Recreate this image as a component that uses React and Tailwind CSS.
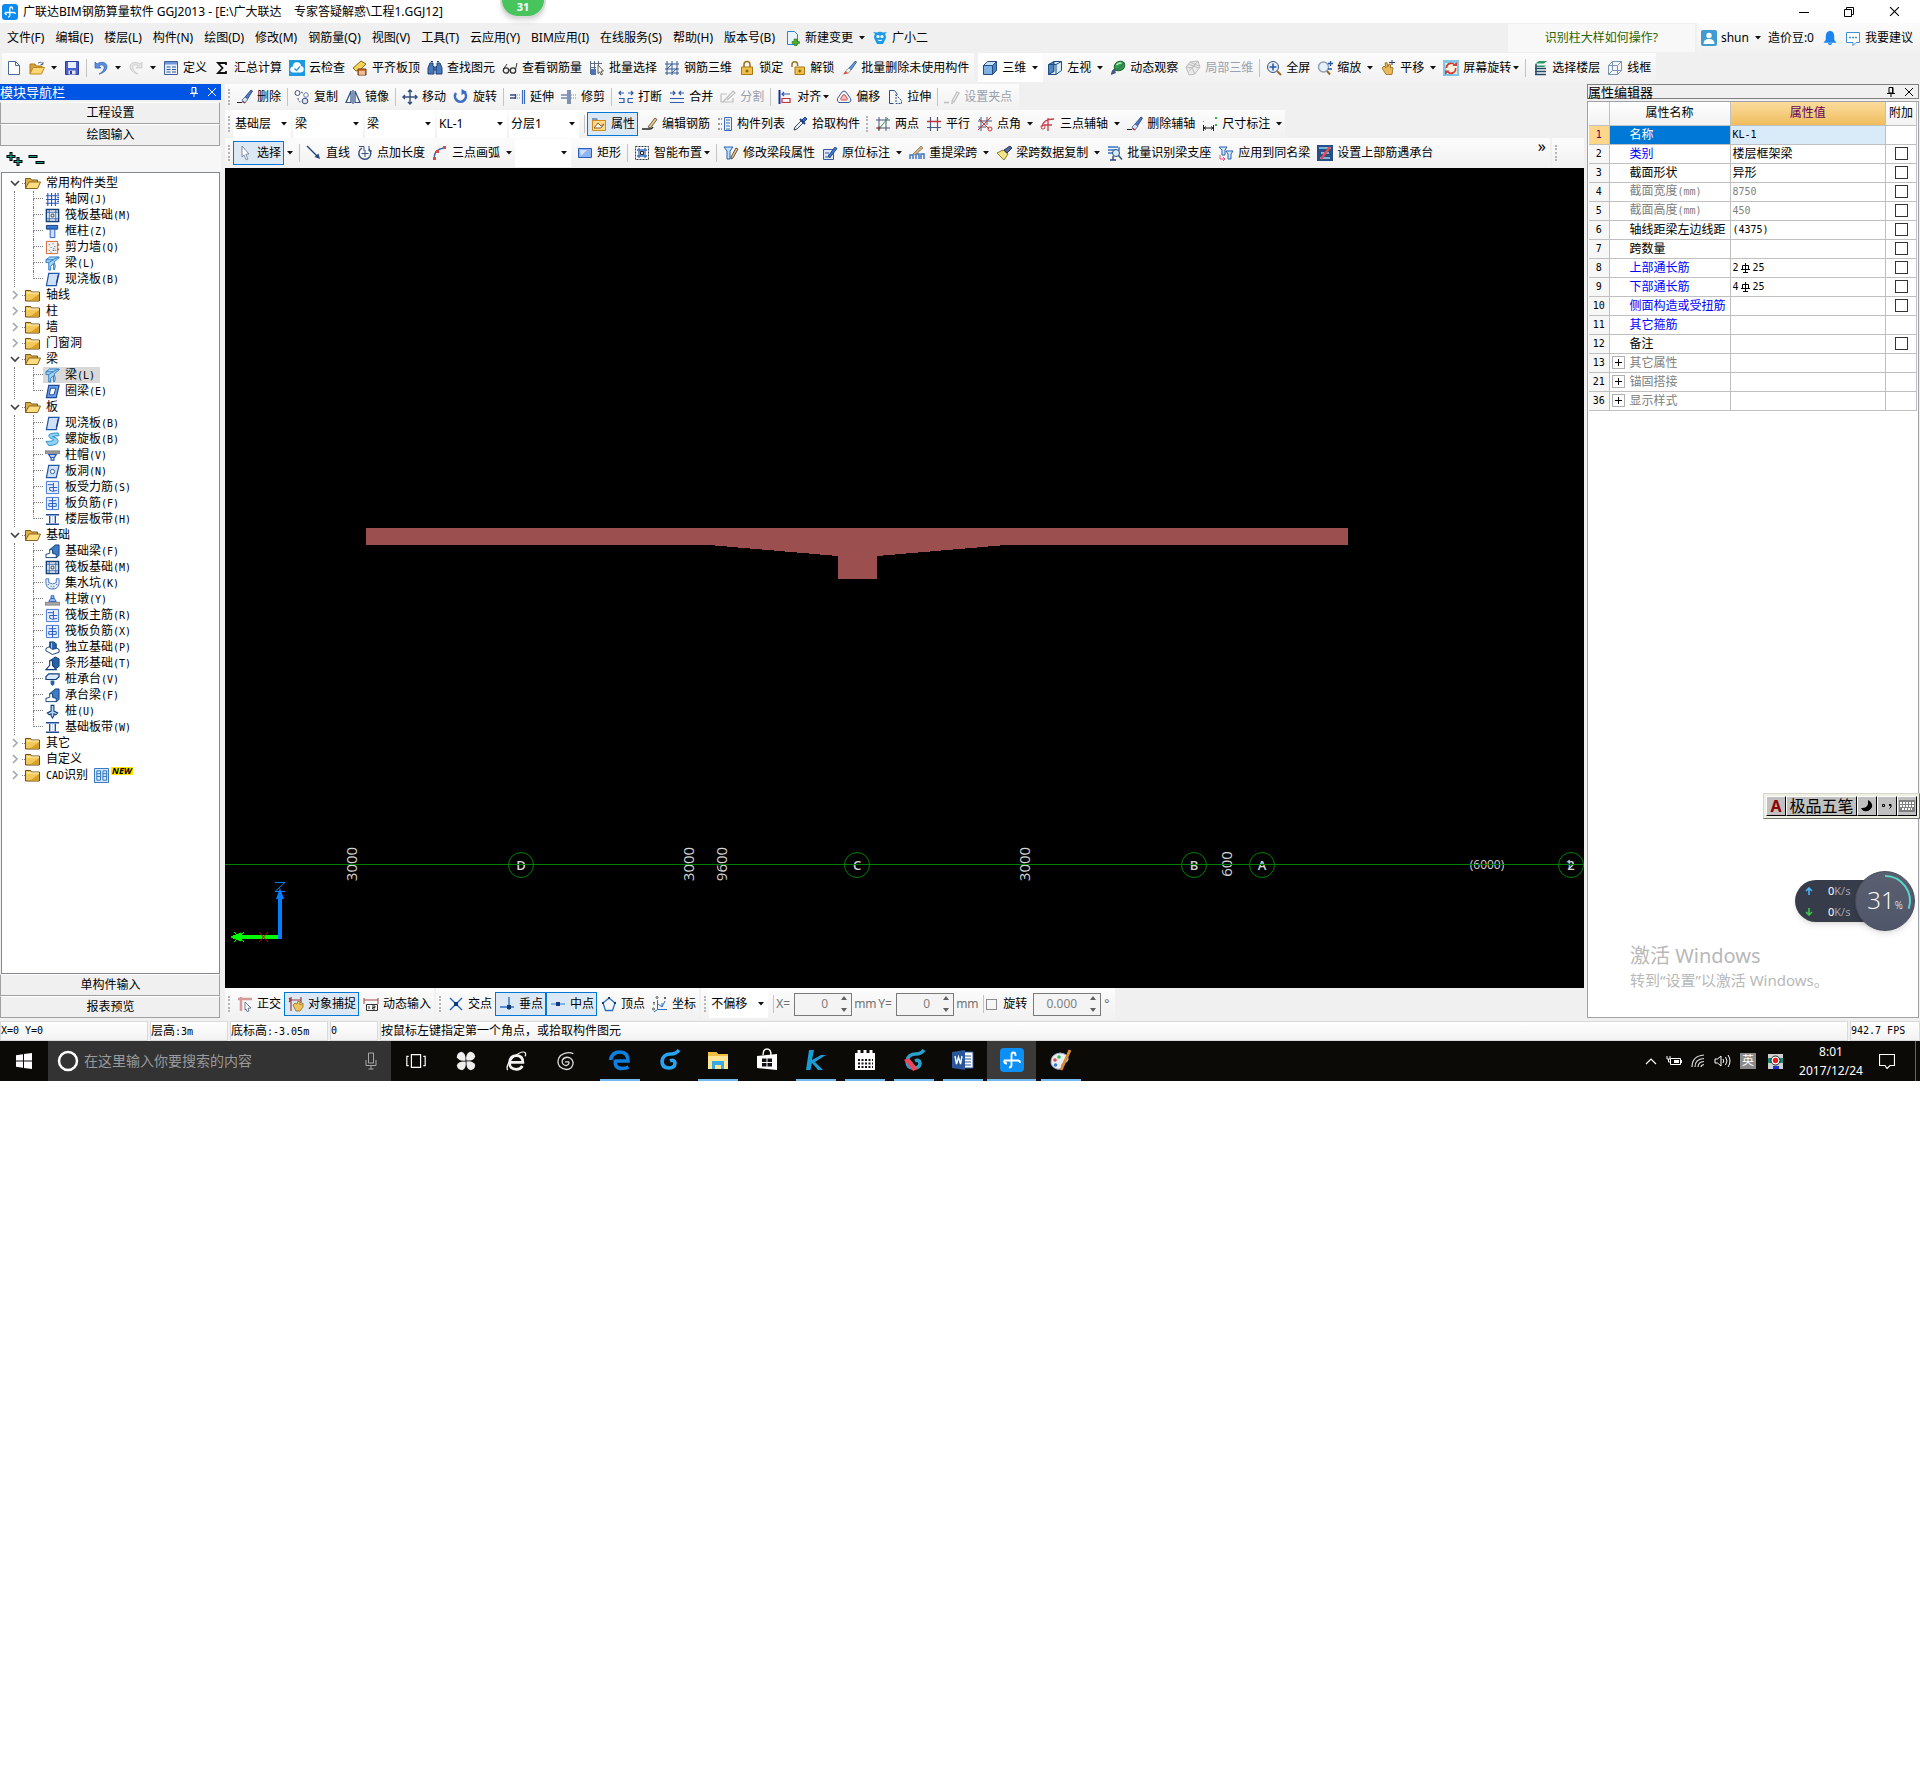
import { useState } from 'react';

const B = '#2b5797';

const ICONS = {
    app: <><rect width="16" height="16" rx="3" fill="#0c8cf0" /><path d="M10.500 5.500V4.500Q10.500 3 9.200 3T7.800 4.500V11.500Q7.800 13 6 13M3 8.500h9q1.300 0 1.300 1.500M3 8.500q0 2 1.800 2" stroke="#fff" strokeWidth="1.300" /></>,
    newFile: <path d="M2.500 1.500h7l4 4v9h-11zM9.500 1.500v4h4" fill="#fff" stroke="#4a6a98" />,
    open: <><path d="M1 14V4h5l1 2h6v2" fill="#d8a03c" stroke="#b07818" /><path d="M1 14 4 7.500h11.500L12.500 14z" fill="#ffd873" stroke="#c08a28" /><path d="M9 3q3-2 5 1m0-2v2.500h-2.500" stroke="#5a6f8f" /></>,
    save: <><path d="M1.500 1.500h13v13h-13z" fill="#4a5fd0" stroke="#2c3c9c" /><path d="M4 2h8v6H4z" fill="#e8eefc" /><path d="M4.500 10.500h7v4h-7z" fill="#dfe4f0" /><path d="M6 11h2v3H6z" fill="#2c3c9c" /></>,
    undo: <><path d="M2 2v6h6L5.800 6C8 4 12 5 11 8.500 10.500 11 8 13 6 14c5-1 8-4 8-7.500C13.500 2 8 1 4 4z" fill="#5b8fe0" stroke="#2c5fb4" strokeWidth=".7" /></>,
    redo: <path d="M14 2v6H8l2.200-2C8 4 4 5 5 8.500 5.500 11 8 13 10 14 5 13 2 10 2 6.500 2.500 2 8 1 12 4z" fill="#e3e3e3" stroke="#c4c4c4" strokeWidth=".7" />,
    define: <><path d="M1.500 1.500h13v13h-13z" fill="#eaf1fc" stroke="#3d5f9e" /><path d="M2 2h12v2.500H2z" fill="#6f98dc" /><path d="M3.500 7h4M3.500 9.500h4M3.500 12h4M9 7h4M9 9.500h4M9 12h4" stroke={B} /></>,
    sigma: <path d="M12 5V3H4l4.500 5L4 13h8v-2" stroke="#111" strokeWidth="1.800" />,
    cloudCheck: <><rect width="16" height="16" fill="#1d9be0" /><path d="M4.500 12.500a3 3 0 0 1-.5-6 4 4 0 0 1 8-.5 3.300 3.300 0 0 1 0 6.500z" fill="#fff" /><path d="m5.500 8.500 2 2 3.500-4" stroke="#1d9be0" strokeWidth="1.300" /></>,
    align: <><path d="M1 8 9 1l5 3-6 6-4 1z" fill="#f4d35c" stroke="#8d6a14" /><path d="M6 9h8v6H6z" fill="#d77a33" stroke="#6d3410" /><path d="M8 15v-4M10 15v-4M12 15v-4M2 12q1 3 3 2" stroke="#fff" /></>,
    binocular: <><path d="M3 3h3v3l1 1v7H1V8zM13 3h-3v3L9 7v7h6V8z" fill="#4879bd" stroke="#203f74" /><path d="M7 7h2v3H7zM4 1.500h2M10 1.500h2" stroke="#203f74" /></>,
    glasses: <><circle cx="4" cy="10.500" r="2.700" stroke="#333" strokeWidth="1.300" /><circle cx="11" cy="10.500" r="2.700" stroke="#333" strokeWidth="1.300" /><path d="M6.500 10h2M13.500 9.500 15 3M1.500 9 5 4" stroke="#333" /></>,
    batch: <><path d="M1.500 1v13M5.500 1v8M9.500 1v4M1 3.500h12M1 7.500h6" stroke="#5c6b82" /><path d="M2 9h5v6H2z" fill="#4c74bd" /><path d="m9 5 5.500 6-2.500.3 1.500 3-1.300.7-1.500-3L9 13.500z" fill="#fff" stroke="#333" strokeWidth=".8" /></>,
    rebar3d: <><path d="M3 1v14M8 1v14M13 1v14M1 4h14M1 9h14M1 13h14M3 9l5-5M8 13l5-5" stroke="#355a95" /></>,
    lock: <><path d="M5 7V4.500a3 3 0 0 1 6 0V7" stroke="#9c7420" strokeWidth="1.600" /><path d="M2.500 7h11v7.500h-11z" fill="#f1c04a" stroke="#a87812" /><path d="M8 9.500v3M6.500 11h3" stroke="#6d4c08" /></>,
    unlock: <><path d="M2 7V4.500a2.800 2.800 0 0 1 5.600 0V6" stroke="#9c7420" strokeWidth="1.500" /><path d="M5 7h9.500v7.500H5z" fill="#f1c04a" stroke="#a87812" /><path d="M9.800 9.500v3M8.300 11h3" stroke="#6d4c08" /></>,
    brush: <><path d="M14.500 1 8 8l2 2 5.500-8z" fill="#5aa0e8" stroke="#254a86" strokeWidth=".8" /><path d="m8 8-3.500 3 2.500 2.500L10 10z" fill="#f2f2f2" stroke="#777" strokeWidth=".7" /><path d="M4.500 11 2 14.500l5-1z" fill="#d2504a" /></>,
    erase: <><path d="M14 1 8 8l2.500 2L15.500 2z" fill="#4b7ac8" stroke="#1f3d78" strokeWidth=".8" /><path d="M8 8 5 11q0 3 3 3l3-4z" fill="#d9e2f2" stroke="#3c5a8c" strokeWidth=".8" /><path d="M6 12q1 2 2 1.500" stroke="#c33" strokeWidth="1.500" /><path d="M0 13.500h5" stroke="#222" /></>,
    cube: <><path d="M1.500 5.500h9v9h-9z" fill="#7fb2e4" stroke="#1f4d84" /><path d="m1.500 5.500 4-4h9l-4 4z" fill="#c6e0f7" stroke="#1f4d84" /><path d="m10.500 5.500 4-4v9l-4 4z" fill="#4f86c0" stroke="#1f4d84" /></>,
    leftView: <><path d="M1.500 4.500 7 1.500v10l-5.500 3z" fill="#4f86c0" stroke="#1f4d84" /><path d="M7 1.500h7.500v9L9 14.500H1.500L7 11.500z" fill="#dcecfa" stroke="#1f4d84" /><path d="M14.500 1.500 9 4.500v10M9 4.500H1.500" stroke="#1f4d84" /></>,
    orbit: <><path d="M1 15c0-5 4-8 8-7-4 1-4 3-3 5z" fill="#445a7a" /><ellipse cx="9.500" cy="6" rx="5.500" ry="4.500" transform="rotate(-30 9.500 6)" fill="#2e9c48" stroke="#176a2c" /><path d="M6.500 5q3-3 5-1.500" stroke="#b9eec4" strokeWidth="1.500" /><path d="M2 11c3 1 9-3 12-9" stroke="#445a7a" /></>,
    local3d: <><path d="m1 7 4-5 8-1 2 6-5 7-6 1z" fill="#e9e9e9" stroke="#bdbdbd" /><path d="m1 7 6 1 3 6M7 8l6-7M3 4l5 2 6 2M5 2l4 2 5 2M4 11l7-8" stroke="#bdbdbd" /></>,
    full: <><circle cx="7" cy="7" r="5.500" fill="#e7f1fc" stroke="#34507f" /><path d="M7 3.500v7M3.500 7h7" stroke="#2456a8" strokeWidth="1.500" /><path d="m11 11 4 4" stroke="#9a6a2a" strokeWidth="2" /></>,
    zoom: <><circle cx="6.500" cy="7" r="5" fill="#e7f1fc" stroke="#8fa0b8" strokeWidth="1.500" /><path d="m10 11 3 3.500" stroke="#9a6a2a" strokeWidth="2" /><path d="M11 3.500h5M13.500 1v5M11 9h4" stroke="#2456a8" strokeWidth="1.300" /></>,
    pan: <><path d="M2 8 4 6l2 2-1-5 2-.5L8 7l1-3 1.500.5V8l1.500-1 1 1-1 6.500H6z" fill="#e9b958" stroke="#93681c" strokeWidth=".8" /><path d="M9 2.500h6M12 0v5" stroke="#2b3c5c" /></>,
    screenRotate: <><rect width="16" height="16" fill="#7cc8e6" /><path d="M2 3h9l3 3v8H4z" fill="#f6f0dc" /><path d="M3.500 8a4.500 4.500 0 0 1 8-3M12.500 8a4.500 4.500 0 0 1-8 3.500" stroke="#d43a3a" strokeWidth="1.700" /><path d="M9.500 6H14V2zM6.500 10.500H2V15z" fill="#d43a3a" /></>,
    floors: <><path d="M3 3.500 7 1h8l-3 2.500zM3 7l2-1.500h9L12 7z" fill="#2c9868" /><path d="M4 4v11M3 8.500h11M3 11.500h11M3 14.500h11" stroke="#254a66" strokeWidth="1.500" /></>,
    wire: <path d="M1.500 5.500h9v9h-9zM1.500 5.500l4-4h9l-4 4M14.500 1.500v9l-4 4M5.500 1.500v9h9M5.500 10.500l-4 4" stroke="#7b93b5" />,
    copy: <><circle cx="3.500" cy="4" r="2.500" stroke="#3b4e74" /><circle cx="12" cy="6" r="2.300" stroke="#6b83ad" /><circle cx="11" cy="12" r="2.800" fill="#dce6f5" stroke="#3b4e74" /><path d="M4 9q0 4 3 4M7 3l2 1" stroke="#3b4e74" strokeDasharray="2 1" /></>,
    mirror: <path d="M6 2v11.500H1zM10 2v11.500h5zM8 1v14" stroke="#2f4f86" strokeWidth="1.200" />,
    move: <path d="M8 1v14M1 8h14M6 3l2-2 2 2M6 13l2 2 2-2M3 6 1 8l2 2M13 6l2 2-2 2" stroke="#34507f" strokeWidth="1.400" />,
    rotate: <><path d="M3 4a5.500 5.500 0 1 0 8-1" stroke="#3c6cc4" strokeWidth="2.600" /><path d="M8.500 0v6L14 3z" fill="#3c6cc4" /></>,
    extend: <><path d="M0 6h5M0 9h5M5.500 5v5" stroke="#2f4f86" strokeWidth="1.300" /><path d="M7 6h4M7 9h4" stroke="#888" strokeDasharray="1 1" /><path d="M12.500 1v14M14.500 1v14" stroke="#3c6cc4" strokeWidth="1.200" /></>,
    trim: <><path d="M0 6h6M0 9h6M7 1v14M9 1v14" stroke="#2f4f86" strokeWidth="1.200" /><path d="M10 6h5M10 9h5" stroke="#888" strokeDasharray="1 1" /></>,
    breakIt: <path d="M1 9.500h5v4H1M10 9.500h5M10 13.500h5M10 9.500v4M1 4h5M10 4h5M3 2 1 4l2 2M13 2l2 2-2 2" stroke="#2f5ca8" strokeWidth="1.200" />,
    merge: <path d="M1 9.500h14M1 13.500h14M1 4h5M15 4h-5M4 2l2 2-2 2M12 2l-2 2 2 2" stroke="#2f5ca8" strokeWidth="1.200" />,
    split: <path d="M1 5h6M1 5v8h12V9M3 13 13 2l2 2-8 7" stroke="#bdbdbd" strokeWidth="1.200" />,
    alignTo: <><path d="M2.500 1v14" stroke="#1c2f9c" strokeWidth="2" /><path d="M5 5h8M7 3 5 5l2 2" stroke="#2f5ca8" strokeWidth="1.200" /><path d="M5 9.500h8v4H5z" stroke="#c2303a" strokeWidth="1.200" /></>,
    offset: <><path d="M3 13.500h10q3-1 1.500-4L10 3Q8 1 6 3L1.500 9.500q-1 3 1.500 4z" stroke="#3b5b96" /><path d="M5.500 11h5q1.500-.5.500-2L9 6Q8 5 7 6L5 9q-1 1.500.5 2z" fill="#f5bcbc" stroke="#c85050" /></>,
    stretch: <><path d="M2.500 14.500v-13h5l3 4M2.500 14.500h4" stroke="#2f4f86" /><path d="M9 5v9.500h5.500v-3L9 6" stroke="#2f4f86" strokeDasharray="2 1" /></>,
    grip: <path d="M0 13.500h5M8 12l5-9 2 1-5 9zM7 14h2" stroke="#bdbdbd" strokeWidth="1.300" />,
    props: <><path d="M1 2h5l1 2h8v2H1z" fill="#7f96bd" /><path d="M1.500 4.500h13v10h-13z" fill="#ffd98a" stroke="#d08a24" /><path d="m3 12 4-5 3 3 3-2-3 4z" fill="#fff" stroke="#8a5a1c" /></>,
    editBar: <><path d="M0 13h8q2 0 3-2" stroke="#222" strokeWidth="1.500" /><path d="m6 11 7-9 2 1.500L8.500 12z" fill="#f0c77a" stroke="#444" strokeWidth=".8" /></>,
    list: <><path d="M7.500 1.500h7v13h-7z" fill="#eef4fd" stroke="#3c68b0" /><path d="M9 4h4M9 7h4M9 10h4M9 13h4" stroke="#3c68b0" /><path d="M1 3h4M1 8h4M1 13h4" stroke="#444" strokeDasharray="2 1" /></>,
    picker: <><path d="m2 14 1-3 6-6 2 2-6 6z" fill="#eaf3ff" stroke="#345" /><path d="m8 3 5 5" stroke="#224488" strokeWidth="2" /><path d="m10 4 3-3 2 2-3 3z" fill="#3b6fc8" stroke="#224488" /></>,
    twoPoint: <><path d="M4 1v14M11 1v14M1 4h14M1 12h14" stroke="#46597e" /><path d="m3 14 10-12" stroke="#2c9c3c" /><circle cx="4" cy="12" r="1.500" fill="#a33" /></>,
    parallel: <><path d="M4.500 1v14M11.500 1v14M1 11.500h14" stroke="#46597e" strokeWidth="1.200" /><path d="M1 5.500h14" stroke="#c2303a" strokeWidth="1.500" /></>,
    pointAngle: <><path d="M4 1v14M10 1v8M1 5h14M1 11h8" stroke="#46597e" /><path d="M1 14 14 1M2 3l10 10" stroke="#d03030" /><circle cx="13" cy="13" r="2" stroke="#d03030" /></>,
    arcAxis: <><path d="M2 11Q3 3 14 3M8 2v13M4 9h8" stroke="#c2404a" strokeWidth="1.300" /><circle cx="3" cy="11" r="2" stroke="#c2404a" /></>,
    dims: <><path d="M1.500 9v6M11.500 9v6M2 12h9M4 10.500 2 12l2 1.500M9 10.500l2 1.500-2 1.500" stroke="#222" /><path d="M13 1h2v2h-2zM13 8h2v2h-2zM1 5h1v1H1z" fill="#35b24a" /></>,
    cursor: <path d="m5 1 7 8-3.200.3L11 14l-1.800.8L7 10l-2 2z" fill="#fff" stroke="#7c8ca8" />,
    line: <><path d="M1 1 12 12" stroke="#27477e" strokeWidth="1.400" /><path d="M14 14 8.500 12l4-3.500z" fill="#27477e" /></>,
    addLen: <><path d="M5 3a6 6 0 1 0 7 1" stroke="#34507f" strokeWidth="1.400" /><path d="M2 1.500h5V6M12 1v5h3M8 5v7M4.500 8.500h7" stroke="#34507f" /></>,
    arc3: <><path d="M2 14Q2 4 12 3" stroke="#3d62a8" strokeWidth="1.400" /><path d="M1 12h3v3H1zM4 5h3v3H4zM11 1h3v3h-3z" fill="#d84a4a" /></>,
    rect: <><path d="M1.500 3.500h13v9h-13z" fill="#8fb4f2" stroke="#2f5cb4" /><path d="M3 5h7L4 11z" fill="#cfe0fb" /></>,
    smart: <><path d="M1.500 1.500h13v13h-13z" stroke="#333" strokeDasharray="2 1" /><path d="M3 5h10M3 11h10M5 3v10M11 3v10" stroke="#3b6fc8" strokeWidth="1.300" /><path d="M6.500 6.500h3v3h-3z" fill="#e7f1fc" stroke="#222" /></>,
    editBeam: <><path d="M1 2h9l-3 4v8H4V6z" fill="#bfe0fa" stroke="#2a62b0" /><path d="m8 12 5-9 2 1-5 9-2 1z" fill="#f3c778" stroke="#333" strokeWidth=".8" /></>,
    inplace: <><path d="M1.500 4.500h10v10h-10z" fill="#dbe8fa" stroke="#3b5b96" /><path d="M3 12h6M3 8h4" stroke="#3b5b96" /><path d="m6 11 7-9 2 1.500-7 9z" fill="#3b78d8" stroke="#1f3d78" strokeWidth=".8" /></>,
    respan: <><path d="M1 14v-4h3v4M7 14v-5h3v5M12 14V9h3v5" stroke="#3c78c8" strokeWidth="1.500" /><path d="m4 9 8-8 2 2-8 7z" fill="#d9b27a" stroke="#776" strokeWidth=".8" /></>,
    copyBrush: <><path d="M1 8 8 15l4-6-5-4z" fill="#f3e38a" stroke="#8d7c20" /><path d="m8 5 6-4 2 2-5 5z" fill="#53699c" stroke="#2a3a66" /></>,
    support: <><path d="M1 2h10M1 5h8M1 8h5M12 2v4" stroke="#3573c4" strokeWidth="1.400" /><circle cx="9" cy="8" r="3.500" fill="#d9ecfb" stroke="#274a7c" /><path d="m11.500 10.500 3.500 4M6 11v4M3 15h6" stroke="#274a7c" strokeWidth="1.400" /></>,
    applyTo: <><path d="M1 2h8l-2 3v5H4V5zM8 6h7l-2 3v5h-3V9z" fill="#cfe6fb" stroke="#2a62b0" /><path d="M2 10v4h5M5 12l2 2-2 2" stroke="#e0507a" /></>,
    topBar: <><rect width="16" height="16" fill="#254f86" /><path d="M2 3h12M3 13h10M4 8h8" stroke="#9ed3f5" strokeWidth="1.500" /><path d="m4 14 9-12" stroke="#e34a4a" strokeWidth="2.500" /></>,
    ortho: <><path d="M1 3h14M4 1v14" stroke="#d79a9a" strokeWidth="2.500" /><path d="m8 6 6 6-3 .3L12 15l-2 .5L9 13l-1 1z" fill="#fff" stroke="#4a6086" strokeWidth=".8" /></>,
    snap: <><path d="M3 1v14M13 1v6M1 4h12M1 6l2-2-2-2" stroke="#9c3c3c" strokeWidth="1.200" /><path d="m5 9 2-2 2 1 1-3 2 1v3l3-2v4l-3 4H8z" fill="#f0c45c" stroke="#93681c" strokeWidth=".8" /></>,
    dynInput: <><path d="M1 2v6M15 2v6M1 4h14" stroke="#a04848" /><path d="M3.500 8.500h11v6h-11zM6 10v3M9 10h3v1.500H9.500V13H12" stroke="#333" /></>,
    cross: <><path d="m2 2 12 12M14 2 2 14" stroke="#1d64c8" strokeWidth="1.400" /><path d="M6 6h4v4H6z" fill="#12387c" /></>,
    perp: <><path d="M10 1v13M1 11h14" stroke="#2a70c8" strokeWidth="1.400" /><path d="M8 9h4v4H8z" fill="#12387c" /></>,
    mid: <><path d="M1 8h14" stroke="#5aa0e8" strokeWidth="1.500" /><path d="M6 6h4v4H6z" fill="#12387c" /></>,
    vertex: <><path d="m8 2 6 5-2.500 7.500h-7L2 7z" stroke="#2a70c8" strokeWidth="1.300" /><path d="M7 1h2v2H7zM1 6h2v2H1zM13 6h2v2h-2z" fill="#12387c" /></>,
    coord: <><path d="M5.500 4v9.500H15M5.500 13.500 2 16M6 8l4 3 3-6M10 11v-4" stroke="#2a70c8" /><circle cx="5" cy="1.500" r="1" stroke="#222" strokeWidth=".7" /><circle cx="1.500" cy="13" r="1" stroke="#222" strokeWidth=".7" /><path d="m12 1 2 2m0-2-2 2M1 6l1 1 1-1M2 7v2" stroke="#222" strokeWidth=".7" /></>,
    change: <><path d="M2.500 1.500h7l3 3v10h-10z" fill="#eaf4fd" stroke="#2f83c4" /><path d="M9 9h3v2.500h2.500v2H12V16H9.500v-2.500H7v-2h2z" fill="#48b032" stroke="#257a18" strokeWidth=".6" /></>,
    robot: <><path d="M3 4 1 2l4 .5Q8 1 11 2.500L15 2l-2 2q2 3 0 6l-2 4H5l-2-4Q1 7 3 4z" fill="#1e9be8" /><circle cx="6" cy="6.500" r="1.600" fill="#fff" /><circle cx="10" cy="6.500" r="1.600" fill="#fff" /><path d="M6 10q2 1.500 4 0" stroke="#fff" /></>,
    user: <><rect width="16" height="16" rx="2" fill="#3f9bd0" /><circle cx="8" cy="5.500" r="2.700" fill="#fff" /><path d="M2.500 14q0-5 5.500-5t5.500 5z" fill="#fff" /></>,
    bell: <path d="M8 1q4 .5 4 5v4l2 2.500H2L4 10V6Q4 1.500 8 1zM6 13.500h4q-2 3-4 0" fill="#1b84ee" stroke="#1b84ee" strokeWidth=".5" />,
    bubble: <><path d="M1.500 2.500h13v10H11l-3 3v-3H1.500z" fill="#fff" stroke="#3f8fd4" /><path d="M4 7.500h8" stroke="#3f8fd4" strokeDasharray="2 1" strokeWidth="1.300" /></>,
    // tree
    folder: <><path d="M.5 3.500h5l1 1.500h8v9H.5z" fill="#f4c95c" stroke="#6b4d12" /><path d="M1.500 6h12.500" stroke="#fff3c4" /><path d="M14 7v6.500H5z" fill="#d9a02c" /></>,
    folderOpen: <><path d="M.5 13.500V3.500h5l1 1.500h6v2.500" fill="#dcae48" stroke="#7b5a18" /><path d="M.5 13.500 4 7h11.500l-3 6.500z" fill="#ffdd80" stroke="#8a661c" /></>,
    axisNet: <path d="M3 1v14M7 1v14M11 1v14M1 4h14M1 8h14M1 12h14M13 2h2M13 6h2M13 10h2" stroke="#2257c0" strokeWidth="1.200" />,
    raft: <><path d="M1.500 1.500h13v13h-13z" stroke="#123f78" strokeWidth="1.600" /><path d="M4.500 2v12M11.500 2v12M2 4.500h12M2 11.500h12" stroke="#2a5fa8" /><path d="M6.500 6.500h3v3h-3z" stroke="#123f78" /></>,
    column: <><path d="M1.500 1.500h12v4h-12z" fill="#3b78d0" stroke="#123f78" /><path d="M5.500 5.500h5v9h-5z" fill="#cfe0fb" stroke="#2257c0" /></>,
    wall: <><path d="M1.500 1.500h12v13h-12z" fill="#f2f2f0" stroke="#d0602c" /><path d="M4 5h1M8 4h1M6 8h1M10 7h1M4 11h1M8 11h2M11 11h1M6 13h1M9 9h1" stroke="#444" /><path d="M14 4v2M14 9v2" stroke="#d0602c" strokeWidth="2" /></>,
    beam: <><path d="m1 4 4-3h10v1l-5 4v1l1 4-1 4-1-1V8L6 11v4H4V7H1z" fill="#a8d4f5" stroke="#2a7ac4" /><path d="m1 4h8l5-3M4 7l5-3" stroke="#2a7ac4" /></>,
    slab: <><path d="M4 1.500h11l-3 13H1.500z" fill="#cfe0fb" stroke="#2257a8" strokeWidth="1.300" /><path d="M12 12 14 3" stroke="#123f78" /></>,
    ring: <><path d="M4 1.500h11l-3 13H1.500z" fill="#6ea0e8" stroke="#1c4a98" strokeWidth="1.300" /><path d="M6 4.500h5.500l-2 7H4.500z" fill="#fff" stroke="#1c4a98" /></>,
    spiral: <path d="M14 1Q3 1 4 4.500 5 7 9 8q1 2-8 2l3 4.500Q15 14 14 9q-.5-3-6-4 3-1 7-1z" fill="#8fd0f5" stroke="#2a8fd0" />,
    cap: <><path d="M0 3h16v3H0z" fill="#999" stroke="#666" strokeWidth=".6" /><path d="M4 7h8l-2 3H6zM6.500 10h3v3h-3z" fill="#fff" stroke="#2257c0" strokeWidth="1.300" /></>,
    hole: <><path d="M4 1.500h11l-3 13H1.500z" fill="#cfe0fb" stroke="#2257a8" strokeWidth="1.300" /><circle cx="8" cy="8" r="2.300" fill="#fff" stroke="#2257a8" /></>,
    force: <><path d="M1.500 1.500h13v13h-13z" fill="#e5eefc" stroke="#3c70d0" /><path d="M3 5h6M9 3v9M5 8h8M5 8v3q3 2 8 0" stroke="#2257c0" /></>,
    negative: <><path d="M1.500 1.500h13v13h-13z" fill="#e5eefc" stroke="#3c70d0" /><path d="M8 2v12M4 5h8M4 8h8M4 11h8M4 8v3M12 8v3" stroke="#2257c0" /></>,
    strip: <><path d="M1 3h14M1 13h14" stroke="#1c4a98" strokeWidth="1.600" /><path d="M5 4v8M11 4v8" stroke="#1c4a98" strokeWidth="1.400" /><path d="M8 4v8" stroke="#9ab8e8" strokeDasharray="1 1" /></>,
    fBeam: <><path d="m5 6 6-5h4v11l-3 3z" fill="#3b7cc4" stroke="#123f78" /><path d="M1 14.500V11l4-1V6h3v4l4 1v3.500z" fill="#fff" stroke="#123f78" /></>,
    pit: <><path d="M1 3h3v4q4 3 8 0V3h3v5q-1 6-7 6t-7-6z" fill="#e4effc" stroke="#3c70c0" /><path d="M3 9h1M6 11h1M9 11h1M12 9h1M8 13h1" stroke="#123f78" /></>,
    pier: <><path d="M0 11h16v3H0z" fill="#aaa" stroke="#666" strokeWidth=".7" /><path d="M4 10h8l-2-3H6zM6.500 4h3v3h-3z" fill="#a9c9f5" stroke="#2257c0" /></>,
    iso: <><path d="m1 9 6-3 8 4v3l-7 2.500-7-4z" fill="#fff" stroke="#123f78" /><path d="M5 2h4l3 2v5L8 10 5 8z" fill="#2a62a8" stroke="#123f78" /><path d="M7 3v6" stroke="#b9d9f5" /></>,
    stripF: <><path d="m5 5 6-4 4 2v8l-4 3z" fill="#2a62a8" stroke="#123f78" /><path d="M1 14.500 5 10V5h3v5l4 4.500z" fill="#fff" stroke="#123f78" strokeWidth="1.200" /></>,
    pileCap: <><path d="m1 5 3-3h11v3l-3 3H1z" fill="#d8eafb" stroke="#123f78" strokeWidth="1.300" /><path d="M6 9h4v4l-2 2-2-2z" fill="#2a62a8" /></>,
    pile: <path d="M6.500 1.500h3v6l4 2-2 2-2-1v2L8 15l-1.500-2.500v-2l-2 1-2-2 4-2z" fill="#bcd8f5" stroke="#123f78" strokeWidth="1.200" />,
    cad: <><path d="M.5.500h15v15H.5z" fill="#d6eafc" stroke="#2a6fb8" /><path d="M3 3h4v10H3zM9.500 3h4v10h-4z" stroke="#2a6fb8" /><path d="M3 6h4M3 9h4M9.500 6h4M9.500 9h4" stroke="#2a6fb8" /></>,
};

function Icon({ name, className = 'size-4' }) {
    return <svg viewBox="0 0 16 16" fill="none" aria-hidden="true" className={`${className} shrink-0`}>{ICONS[name]}</svg>;
}

function Arrow() {
    return <svg viewBox="0 0 6 4" aria-hidden="true" className="w-1.5 h-1 shrink-0"><path d="M0 0h6L3 3.500z" fill="#111" /></svg>;
}

// Latin characters take half the width of a Chinese one
function Mono({ children }) {
    return children.split(/([\x20-\x7e]+)/).map((part, i) => (
        i % 2 ? <span key={i} className="font-['DejaVu_Sans_Mono',monospace] text-[10px] whitespace-pre">{part}</span> : part
    ));
}

function Tool({ icon, label, active, off, menu, split, title }) {
    return (
        <>
            <button
                type="button"
                disabled={off}
                aria-label={label ? undefined : title}
                className={`flex items-center h-6 shrink-0 border pl-[3px] pr-0.5 whitespace-nowrap ${active ? 'border-[#0078d7] bg-[#dce9f5]' : 'border-transparent'} ${off ? 'text-gray-400' : ''}`}
            >
                <Icon name={icon} />
                {label && <span className="ml-1">{label}</span>}
                {menu && <span className="w-2 pl-0.5"><Arrow /></span>}
            </button>
            {split && (
                <button type="button" aria-label={`${label || title} 更多`} className="flex items-center justify-center w-3 h-6 shrink-0">
                    <Arrow />
                </button>
            )}
        </>
    );
}

function Combo({ value, label, className }) {
    return (
        <div className={`flex items-center shrink-0 h-7 pl-0.5 pr-1 mr-0.5 bg-white ${className}`}>
            <select aria-label={label} className="appearance-none flex-1 min-w-0 bg-transparent outline-none">
                <option>{value}</option>
            </select>
            <Arrow />
        </div>
    );
}

const Sep = () => <span className="w-px h-[18px] ml-[3px] mr-0.5 shrink-0 bg-[#c4c4c4]" />;
const Grip = () => <span className="h-4 mx-[3px] shrink-0 border-l-2 border-dotted border-[#b4b4b4]" />;

function Group({ children, className = '' }) {
    return <div className={`flex items-center h-full shrink-0 bg-linear-to-b from-[#fcfcfc] to-[#f1f1f1] ${className}`}>{children}</div>;
}

function tools(items) {
    return items.map((t, i) => (t === '|' ? <Sep key={i} /> : <Tool key={i} {...t} />));
}

const MAIN_TOOLS = [
    { icon: 'newFile', title: '新建' }, { icon: 'open', title: '打开', split: true }, { icon: 'save', title: '保存' }, '|',
    { icon: 'undo', title: '撤销', split: true }, { icon: 'redo', title: '恢复', split: true },
    { icon: 'define', label: '定义' }, { icon: 'sigma', label: '汇总计算' }, { icon: 'cloudCheck', label: '云检查' },
    { icon: 'align', label: '平齐板顶' }, { icon: 'binocular', label: '查找图元' }, { icon: 'glasses', label: '查看钢筋量' },
    { icon: 'batch', label: '批量选择' }, { icon: 'rebar3d', label: '钢筋三维' }, { icon: 'lock', label: '锁定' },
    { icon: 'unlock', label: '解锁' }, { icon: 'brush', label: '批量删除未使用构件' },
];
const VIEW_TOOLS = [
    { icon: 'leftView', label: '左视', split: true },
    { icon: 'orbit', label: '动态观察' }, { icon: 'local3d', label: '局部三维', off: true }, '|',
    { icon: 'full', label: '全屏' }, { icon: 'zoom', label: '缩放', split: true }, { icon: 'pan', label: '平移', split: true },
    { icon: 'screenRotate', label: '屏幕旋转', menu: true }, '|', { icon: 'floors', label: '选择楼层' }, { icon: 'wire', label: '线框' },
];
const EDIT_TOOLS = [
    { icon: 'erase', label: '删除' }, '|', { icon: 'copy', label: '复制' }, { icon: 'mirror', label: '镜像' }, '|',
    { icon: 'move', label: '移动' }, { icon: 'rotate', label: '旋转' }, '|', { icon: 'extend', label: '延伸' }, { icon: 'trim', label: '修剪' }, '|',
    { icon: 'breakIt', label: '打断' }, { icon: 'merge', label: '合并' }, { icon: 'split', label: '分割', off: true }, '|',
    { icon: 'alignTo', label: '对齐', menu: true }, { icon: 'offset', label: '偏移' }, { icon: 'stretch', label: '拉伸' }, '|',
    { icon: 'grip', label: '设置夹点', off: true },
];
const PART_TOOLS = [
    { icon: 'props', label: '属性', active: true }, { icon: 'editBar', label: '编辑钢筋' },
    { icon: 'list', label: '构件列表' }, { icon: 'picker', label: '拾取构件' },
];
const AXIS_TOOLS = [
    { icon: 'twoPoint', label: '两点' }, { icon: 'parallel', label: '平行' }, { icon: 'pointAngle', label: '点角', split: true },
    { icon: 'arcAxis', label: '三点辅轴', split: true }, { icon: 'erase', label: '删除辅轴' }, { icon: 'dims', label: '尺寸标注', split: true },
];
const DRAW_TOOLS = [
    { icon: 'cursor', label: '选择', active: true, split: true }, '|', { icon: 'line', label: '直线' },
    { icon: 'addLen', label: '点加长度' }, { icon: 'arc3', label: '三点画弧', split: true },
];
const BEAM_TOOLS = [
    { icon: 'rect', label: '矩形' }, '|', { icon: 'smart', label: '智能布置', menu: true }, '|',
    { icon: 'editBeam', label: '修改梁段属性' }, { icon: 'inplace', label: '原位标注', split: true },
    { icon: 'respan', label: '重提梁跨', split: true }, { icon: 'copyBrush', label: '梁跨数据复制', split: true },
    { icon: 'support', label: '批量识别梁支座' }, { icon: 'applyTo', label: '应用到同名梁' }, { icon: 'topBar', label: '设置上部筋遇承台' },
];
const SNAP_TOOLS = [
    { icon: 'cross', label: '交点' }, { icon: 'perp', label: '垂点', active: true }, { icon: 'mid', label: '中点', active: true },
    { icon: 'vertex', label: '顶点' }, { icon: 'coord', label: '坐标' },
];
const MENUS = ['文件(F)', '编辑(E)', '楼层(L)', '构件(N)', '绘图(D)', '修改(M)', '钢筋量(Q)', '视图(V)', '工具(T)', '云应用(Y)', 'BIM应用(I)', '在线服务(S)', '帮助(H)', '版本号(B)'];

const TREE = [
    { name: '常用构件类型', items: [['axisNet', '轴网(J)'], ['raft', '筏板基础(M)'], ['column', '框柱(Z)'], ['wall', '剪力墙(Q)'], ['beam', '梁(L)'], ['slab', '现浇板(B)']] },
    { name: '轴线' }, { name: '柱' }, { name: '墙' }, { name: '门窗洞' },
    { name: '梁', items: [['beam', '梁(L)', true], ['ring', '圈梁(E)']] },
    { name: '板', items: [['slab', '现浇板(B)'], ['spiral', '螺旋板(B)'], ['cap', '柱帽(V)'], ['hole', '板洞(N)'], ['force', '板受力筋(S)'], ['negative', '板负筋(F)'], ['strip', '楼层板带(H)']] },
    { name: '基础', items: [['fBeam', '基础梁(F)'], ['raft', '筏板基础(M)'], ['pit', '集水坑(K)'], ['pier', '柱墩(Y)'], ['force', '筏板主筋(R)'], ['negative', '筏板负筋(X)'], ['iso', '独立基础(P)'], ['stripF', '条形基础(T)'], ['pileCap', '桩承台(V)'], ['fBeam', '承台梁(F)'], ['pile', '桩(U)'], ['strip', '基础板带(W)']] },
    { name: '其它' }, { name: '自定义' }, { name: 'CAD识别', isNew: true },
];

const PROPS = [
    { no: 1, name: '名称', value: 'KL-1', tone: 'text-white' },
    { no: 2, name: '类别', value: '楼层框架梁', tone: 'text-[#0000ff]', check: true },
    { no: 3, name: '截面形状', value: '异形', check: true },
    { no: 4, name: '截面宽度(mm)', value: '8750', tone: 'text-[#808080]', check: true },
    { no: 5, name: '截面高度(mm)', value: '450', tone: 'text-[#808080]', check: true },
    { no: 6, name: '轴线距梁左边线距', value: '(4375)', check: true },
    { no: 7, name: '跨数量', value: '', check: true },
    { no: 8, name: '上部通长筋', bars: ['2', '25'], tone: 'text-[#0000ff]', check: true },
    { no: 9, name: '下部通长筋', bars: ['4', '25'], tone: 'text-[#0000ff]', check: true },
    { no: 10, name: '侧面构造或受扭筋', value: '', tone: 'text-[#0000ff]', check: true },
    { no: 11, name: '其它箍筋', value: '', tone: 'text-[#0000ff]' },
    { no: 12, name: '备注', value: '', check: true },
    { no: 13, name: '其它属性', value: '', tone: 'text-[#808080]', plus: true },
    { no: 21, name: '锚固搭接', value: '', tone: 'text-[#808080]', plus: true },
    { no: 36, name: '显示样式', value: '', tone: 'text-[#808080]', plus: true },
];

function Pin() {
    return <svg viewBox="0 0 10 10" fill="none" className="size-2.5"><path d="M3 .5h4V6H3zM6.500 1v5M1 6.500h8M5 7v3" stroke="currentColor" /></svg>;
}

function Close({ className = 'size-2.5' }) {
    return <svg viewBox="0 0 10 10" fill="none" className={className}><path d="m1 1 8 8M9 1 1 9" stroke="currentColor" /></svg>;
}

function TitleBar() {
    return (
        <header className="relative flex items-center h-[23px] px-0.5">
            <Icon name="app" />
            <h1 className="ml-[5px] flex-1 whitespace-pre">广联达BIM钢筋算量软件 GGJ2013 - [E:\广大联达    专家答疑解惑\工程1.GGJ12]</h1>
            <div className="flex items-center gap-[35px] pr-[18px]">
                <button type="button" aria-label="最小化"><svg viewBox="0 0 10 10" className="size-2.5"><path d="M0 5.500h10" stroke="#000" /></svg></button>
                <button type="button" aria-label="还原"><svg viewBox="0 0 10 10" fill="none" className="size-2.5"><path d="M.5 2.500h7v7h-7zM2.500 2.500v-2h7v7h-2" stroke="#000" /></svg></button>
                <button type="button" aria-label="关闭"><Close className="size-[11px]" /></button>
            </div>
            <div className="absolute z-10 left-[500px] top-0 w-[46px] h-[18px] rounded-b-full border-2 border-t-0 border-[#d8d8d8] bg-[#48c45c] shadow-md text-center text-white text-[11px] leading-[14px] font-bold">31</div>
        </header>
    );
}

function MenuBar() {
    return (
        <nav className="flex items-center h-[30px] pl-[7px]">
            <div className="flex items-center gap-[11px] whitespace-nowrap">
                {MENUS.map((m) => <button type="button" key={m}>{m}</button>)}
            </div>
            <div className="flex items-center ml-1.5">
                <Tool icon="change" label="新建变更" split />
                <Tool icon="robot" label="广小二" />
            </div>
            <div className="ml-auto flex items-center h-full">
                <div className="w-[187px] h-7 flex items-center justify-center bg-[#f8f8f8]">
                    <a href="#help" className="text-[#2f6400]">识别柱大样如何操作?</a>
                </div>
                <Group className="ml-0.5 pr-1">
                    <Tool icon="user" label="shun" split />
                    <span className="mx-1 whitespace-nowrap">造价豆:0</span>
                    <Tool icon="bell" title="通知" />
                    <Tool icon="bubble" label="我要建议" />
                </Group>
            </div>
        </nav>
    );
}

function Tree() {
    return (
        <ul className="flex-1 mx-px pt-0.5 pl-1.5 bg-white border border-[#828790] overflow-hidden">
            {TREE.map((group) => (
                <li key={group.name}>
                    <div className="flex items-center h-4">
                        <svg viewBox="0 0 14 10" fill="none" className="w-3.5 h-2.5 shrink-0">
                            {group.items
                                ? <path d="m3 3 4 4 4-4" stroke="#404040" strokeWidth="1.600" />
                                : <path d="m5 1 4 4-4 4" stroke="#a6a6a6" strokeWidth="1.600" />}
                        </svg>
                        <span className="w-[3px] border-t border-dotted border-[#808080]" />
                        <Icon name={group.items ? 'folderOpen' : 'folder'} />
                        <span className="ml-[5px]"><Mono>{group.name}</Mono></span>
                        {group.isNew && (
                            <>
                                <Icon name="cad" className="size-[15px] ml-1.5" />
                                <span className="self-start ml-0.5 px-px bg-[#ffe600] text-[9px] leading-[8px] font-bold italic">NEW</span>
                            </>
                        )}
                    </div>
                    {group.items && (
                        <ul className="ml-1.5 border-l border-dotted border-[#808080]">
                            {group.items.map(([icon, label, selected], i) => (
                                <li key={label} className="flex items-center h-4 pl-[18px]">
                                    <span className="w-2.5 h-4 shrink-0">
                                        <span className="block h-2 border-l border-b border-dotted border-[#808080]" />
                                        {i < group.items.length - 1 && <span className="block h-2 border-l border-dotted border-[#808080]" />}
                                    </span>
                                    <span className={`flex items-center h-4 pl-0.5 pr-[5px] ${selected ? 'bg-[#d9d9d9]' : ''}`}>
                                        <Icon name={icon} className="size-[15px]" />
                                        <span className="ml-[5px]"><Mono>{label}</Mono></span>
                                    </span>
                                </li>
                            ))}
                        </ul>
                    )}
                </li>
            ))}
        </ul>
    );
}

function NavButton({ children }) {
    return <button type="button" className="h-[22px] shrink-0 w-full border border-[#a0a0a0] border-t-white bg-[#f0f0f0] pl-px">{children}</button>;
}

function NavPanel() {
    return (
        <aside className="flex flex-col w-[221px] shrink-0 mr-1">
            <div className="flex items-center h-4 bg-[#0055e5] text-white text-[13px] leading-4">
                <h2 className="flex-1">模块导航栏</h2>
                <button type="button" aria-label="固定"><Pin /></button>
                <button type="button" aria-label="关闭导航栏" className="ml-2 mr-1"><Close /></button>
            </div>
            <div className="pt-0.5 pr-px"><NavButton>工程设置</NavButton><NavButton>绘图输入</NavButton></div>
            <div className="flex items-center gap-1 h-[26px] pl-1.5 bg-[#f7f7f7]">
                <button type="button" aria-label="全部展开">
                    <svg viewBox="0 0 18 16" className="w-[18px] h-4" fill="none"><path d="M5 1v9M.5 5.500h9M12 6v9M7.500 10.500h9" stroke="#000" strokeWidth="3" /><path d="M5 2v7M1.500 5.500h7M12 7v7M8.500 10.500h7" stroke="#1aa090" strokeWidth="1.200" /></svg>
                </button>
                <button type="button" aria-label="全部折叠">
                    <svg viewBox="0 0 18 16" className="w-[18px] h-4" fill="none"><path d="M.5 5.500h9M7.500 11.500h9" stroke="#000" strokeWidth="3" /><path d="M1.500 5.500h7M8.500 11.500h7" stroke="#1aa090" strokeWidth="1.200" /></svg>
                </button>
            </div>
            <Tree />
            <div className="pr-px pb-0.5"><NavButton>单构件输入</NavButton><NavButton>报表预览</NavButton></div>
        </aside>
    );
}

const DIMS = [[127, '3000'], [464, '3000'], [497, '9600'], [800, '3000'], [1002, '600']];
const AXES = [[296, 'D'], [632, 'C'], [969, 'B'], [1037, 'A'], [1346, '2']];

function Canvas() {
    return (
        <svg className="block w-full h-[820px] bg-black font-['Open_Sans',sans-serif]" role="img" aria-label="绘图区">
            <path d="M141 360h982v17H781L652 388v23h-39v-23L484 377H141z" fill="#9b4f4f" shapeRendering="crispEdges" />
            <g fill="#d4d4d4" textAnchor="middle" fontSize="15">
                {DIMS.map(([x, t]) => <text key={x} transform={`translate(${x + 5} 696) rotate(-90)`}>{t}</text>)}
                <text x="1262" y="701" fontSize="12">(6000)</text>
                <text x="1344" y="701" fontSize="12">1</text>
                {AXES.map(([x, t]) => <text key={x} x={x} y="702" fontSize="13" fontWeight="600">{t}</text>)}
            </g>
            <path d="M0 696.500h1359" stroke="#008000" />
            {AXES.map(([x]) => <circle key={x} cx={x} cy="697" r="12.500" fill="none" stroke="#008000" />)}
            <path d="M8 769h47" stroke="#00ff00" strokeWidth="4" />
            <path d="m6 769 10-4v8zM9 764l10 10M9 774l10-10" fill="#00ff00" stroke="#00ff00" />
            <path d="m34 764 9 10M34 774l9-10" stroke="#c00000" />
            <path d="M55 771v-46" stroke="#0080ff" strokeWidth="4" />
            <path d="m55 720-4 11h8z" fill="#0080ff" />
            <path d="M50 714.500h10L50 723.500h10" fill="none" stroke="#0080ff" />
        </svg>
    );
}

function Spin({ id, value, className }) {
    return (
        <span className={`flex items-center h-[23px] shrink-0 border border-[#7a7a7a] bg-[#f4f4f4] ${className}`}>
            <input id={id} defaultValue={value} className="flex-1 min-w-0 pr-[11px] text-right text-[#808080] bg-transparent outline-none" />
            <svg viewBox="0 0 12 18" className="w-3 h-[18px] shrink-0"><path d="M2 5h6L5 1zM2 13h6l-3 4z" fill="#606060" /></svg>
        </span>
    );
}

function SnapBar() {
    return (
        <div className="flex items-center h-8">
            <Group>
                <Grip />
                {tools([{ icon: 'ortho', label: '正交' }, { icon: 'snap', label: '对象捕捉', active: true }, { icon: 'dynInput', label: '动态输入' }])}
            </Group>
            <Group className="ml-0.5"><Grip />{tools(SNAP_TOOLS)}</Group>
            <Group className="ml-0.5 pr-1.5 text-[#707070]">
                <Grip />
                <Combo value="不偏移" label="偏移方式" className="w-[59px] text-black" />
                <Sep />
                <label htmlFor="off-x" className="w-[18px]">X=</label><Spin id="off-x" value="0" className="w-[58px]" />
                <span className="w-[26px] pl-0.5">mm</span>
                <label htmlFor="off-y" className="w-[18px]">Y=</label><Spin id="off-y" value="0" className="w-[58px]" />
                <span className="w-[26px] pl-0.5">mm</span>
                <Sep />
                <input id="rot" type="checkbox" className="appearance-none size-[11px] border border-[#8c8c8c]" />
                <label htmlFor="rot" className="text-black mx-1.5">旋转</label>
                <Spin id="deg" value="0.000" className="w-[68px]" />
                <label htmlFor="deg" className="pl-[3px]">°</label>
            </Group>
        </div>
    );
}

function Workspace() {
    return (
        <main className="flex-1 min-w-0 flex flex-col">
            <div className="flex h-[26px]"><Group className="pr-1"><Grip />{tools(EDIT_TOOLS)}</Group></div>
            <div className="flex h-7">
                <Group>
                    <Grip />
                    <Combo value="基础层" label="楼层" className="w-[58px]" />
                    <Combo value="梁" label="构件大类" className="w-[70px]" />
                    <Combo value="梁" label="构件类型" className="w-[70px]" />
                    <Combo value="KL-1" label="构件" className="w-[70px]" />
                    <Combo value="分层1" label="分层" className="w-[70px]" />
                    <Sep />
                    {tools(PART_TOOLS)}
                </Group>
                <Group><Grip />{tools(AXIS_TOOLS)}</Group>
            </div>
            <div className="flex items-center h-[30px]">
                <Group className="flex-1">
                    <Grip />
                    {tools(DRAW_TOOLS)}
                    <Combo value="" label="画弧方式" className="w-14" />
                    {tools(BEAM_TOOLS)}
                    <button type="button" aria-label="更多工具" className="ml-auto mr-1 self-start text-base leading-4">»</button>
                </Group>
                <Group className="ml-0.5 w-8"><Grip /></Group>
            </div>
            <Canvas />
            <SnapBar />
        </main>
    );
}

function PropertyTable() {
    const [picked, setPicked] = useState({});

    return (
        <table className="w-full table-fixed border-collapse leading-4">
            <colgroup><col className="w-5" /><col className="w-[121px]" /><col /><col className="w-[31px]" /></colgroup>
            <thead>
                <tr className="h-[23px] bg-linear-to-b from-white to-[#f2f2f2]">
                    <th className="border-r border-b border-[#c0c0c0]" />
                    <th className="border-r border-b border-[#c0c0c0] font-normal">属性名称</th>
                    <th className="border-r border-b border-[#c0c0c0] font-normal text-[#600060] bg-linear-to-b from-[#fbdc9c] to-[#efbd5c]">属性值</th>
                    <th className="border-r border-b border-[#c0c0c0] font-normal">附加</th>
                </tr>
            </thead>
            <tbody>
                {PROPS.map((p) => (
                    <tr key={p.no} className="h-[19px]">
                        <td className={`p-0 border-r border-b border-[#c0c0c0] text-center ${p.no === 1 ? 'bg-[#ffd68a] text-[#600060]' : 'bg-[#f7f7f7]'}`}><Mono>{String(p.no)}</Mono></td>
                        <td className={`p-0 border-r border-b border-[#c0c0c0] whitespace-nowrap ${p.tone || ''} ${p.no === 1 ? 'bg-[#0078d7]' : ''}`}>
                            <div className="flex items-center h-[18px]">
                                <span className="w-5 pl-0.5 shrink-0">
                                    {p.plus && (
                                        <button type="button" aria-label={`展开${p.name}`} className="flex items-center justify-center size-[13px] border border-[#b0b0b0] text-black">
                                            <svg viewBox="0 0 9 9" className="size-[9px]"><path d="M4.500 1v7M1 4.500h7" stroke="#000" /></svg>
                                        </button>
                                    )}
                                </span>
                                <span><Mono>{p.name}</Mono></span>
                            </div>
                        </td>
                        <td className={`p-0 pl-0.5 border-r border-b border-[#c0c0c0] ${p.tone === 'text-[#808080]' ? p.tone : ''} ${p.no === 1 ? 'bg-[#d9eaf9]' : ''}`}>
                            {p.bars ? (
                                <span className="flex items-center gap-0.5">
                                    <Mono>{p.bars[0]}</Mono>
                                    <svg viewBox="0 0 10 10" fill="none" className="size-2.5"><path d="M4.500 0v9M1.500 2.500h6v4h-6zM0 6.500h9M2 9.500h5" stroke="#000" /></svg>
                                    <Mono>{p.bars[1]}</Mono>
                                </span>
                            ) : <Mono>{p.value}</Mono>}
                        </td>
                        <td className="p-0 border-r border-b border-[#c0c0c0]">
                            {p.check && (
                                <input
                                    type="checkbox"
                                    aria-label={`附加 ${p.name}`}
                                    checked={!!picked[p.no]}
                                    onChange={() => setPicked({ ...picked, [p.no]: !picked[p.no] })}
                                    className="block mx-auto appearance-none size-[13px] border border-[#333] bg-white checked:bg-[#333]"
                                />
                            )}
                        </td>
                    </tr>
                ))}
            </tbody>
        </table>
    );
}

function ImeBar() {
    const cell = 'flex items-center justify-center h-5 bg-[#c0c0c0] border border-t-white border-l-white border-r-black border-b-black';
    return (
        <div className="absolute right-0 bottom-[201px] flex w-[157px] h-[26px] p-0.5 bg-[#f0efe4] border border-[#d8d6c8] border-b-[#77756a] border-r-[#77756a]">
            <button type="button" className={`${cell} w-5 text-base leading-4 font-bold text-[#900000]`}>A</button>
            <button type="button" className={`${cell} w-[71px] text-base leading-4`}>极品五笔</button>
            <button type="button" aria-label="半角" className={`${cell} w-5`}><svg viewBox="0 0 12 12" className="size-3"><path d="M7 0q5 3 4 7-2 5-8 4-2-.5-3-3 8 1 7-8z" /></svg></button>
            <button type="button" aria-label="标点" className={`${cell} w-5`}><svg viewBox="0 0 12 12" className="size-3" fill="none"><path d="M1.500 4.500h2v2h-2zM8 4.500h2V7L8.500 8.500M8 5.500h2" stroke="#000" /></svg></button>
            <button type="button" aria-label="软键盘" className={`${cell} w-5`}><svg viewBox="0 0 16 12" className="w-4 h-3" fill="none"><path d="M0 0h16v12H0z" fill="#808080" /><path d="M1 3h14M1 6h14M3 9h10" stroke="#fff" strokeWidth="2" strokeDasharray="2 1" /></svg></button>
        </div>
    );
}

function SpeedBall() {
    return (
        <div className="absolute right-[5px] bottom-[89px] flex items-center text-white">
            <div className="w-[90px] h-[42px] -mr-[30px] rounded-l-full bg-[#363c4a] shadow-md pl-2.5 flex flex-col justify-around text-[11px] leading-4">
                <div className="flex items-center gap-[15px]"><svg viewBox="0 0 8 8" className="size-2" fill="none"><path d="M4 8V1M1 4l3-3 3 3" stroke="#4ab4ff" strokeWidth="1.600" /></svg><span>0<span className="text-[#a0a4ae]">K/s</span></span></div>
                <div className="flex items-center gap-[15px]"><svg viewBox="0 0 8 8" className="size-2" fill="none"><path d="M4 0v7M1 4l3 3 3-3" stroke="#3cc84a" strokeWidth="1.600" /></svg><span>0<span className="text-[#a0a4ae]">K/s</span></span></div>
            </div>
            <div className="relative size-[60px] rounded-full bg-linear-to-b from-[#5a6070] to-[#50566a] border border-[#464c5a] shadow-md flex items-baseline justify-center pt-3 font-['Open_Sans',sans-serif] font-light text-2xl leading-8">
                31<span className="text-[10px]">%</span>
                <svg viewBox="0 0 60 60" fill="none" className="absolute inset-0"><path d="M30 4a26 26 0 0 1 24.500 34" stroke="#54dcc8" strokeWidth="2" /></svg>
            </div>
        </div>
    );
}

function PropertyPanel() {
    return (
        <aside className="relative flex flex-col w-[333px] shrink-0 ml-[3px] pr-px pb-0.5">
            <div className="flex items-center h-[15px] border border-[#808080] text-[13px] leading-3">
                <h2 className="flex-1">属性编辑器</h2>
                <button type="button" aria-label="固定"><Pin /></button>
                <button type="button" aria-label="关闭属性编辑器" className="ml-2 mr-1"><Close /></button>
            </div>
            <div className="flex-1 mt-0.5 px-px bg-white border border-[#a0a0a8]">
                <PropertyTable />
            </div>
            <ImeBar />
            <SpeedBall />
            <div className="absolute left-[43px] bottom-7 text-[#b8b8b8] whitespace-nowrap">
                <p className="text-xl leading-6">激活 Windows</p>
                <p className="text-[15px] leading-6">转到“设置”以激活 Windows。</p>
            </div>
        </aside>
    );
}

function StatusBar() {
    const cell = 'flex items-center h-full pr-0.5 border border-[#dadada] bg-linear-to-b from-white to-[#f2f2f2] whitespace-nowrap';
    return (
        <footer className="flex gap-0.5 h-[21px] pt-px">
            <div className={`${cell} w-[148px]`}><Mono>X=0 Y=0</Mono></div>
            <div className={`${cell} w-[78px]`}><span><Mono>层高:3m</Mono></span></div>
            <div className={`${cell} w-[98px]`}><span><Mono>底标高:-3.05m</Mono></span></div>
            <div className={`${cell} w-12`}><Mono>0</Mono></div>
            <div className={`${cell} flex-1`}>按鼠标左键指定第一个角点，或拾取构件图元</div>
            <div className={`${cell} w-[70px]`}><Mono>942.7 FPS</Mono></div>
        </footer>
    );
}

const PINNED = [
    ['任务视图', <path d="M7 5h10v14H7zM4 7H2v10h2M20 7h2v10h-2" stroke="#fff" strokeWidth="1.300" />],
    ['风扇', <g fill="#eee"><path d="M11.500 11.500Q5 13 2 8q0-5 5-6 5 1 4.500 9.500z" /><path d="M12.500 11.500Q11 5 16 2q5 0 6 5-1 5-9.500 4.500z" /><path d="M12.500 12.500Q19 11 22 16q0 5-5 6-5-1-4.500-9.500z" /><path d="M11.500 12.500Q13 19 8 22q-5 0-6-5 1-5 9.500-4.500z" /></g>],
    ['IE', <><path d="M6 13.500h13.500Q19.500 6 12.500 6T5 13.500 12.500 21q4.500 0 6.500-3.500" stroke="#f2f2f2" strokeWidth="3" /><path d="M3 22Q0 17 9 8q10-8 13-5 1 1 0 4" stroke="#f2f2f2" strokeWidth="1.400" /></>],
    ['浏览器', <path d="M20 4Q13 1 6 6q-5 6-1 12 7 6 13 1 4-6-1-10-6-3-9 2-1 5 4 6 4-1 3-4h-4" stroke="#ddd" strokeWidth="1.400" />],
];
const RUNNING = [
    ['Edge', true, <path d="M2.500 12Q4 4 12 4q8 0 8 9H7M7.500 12Q6 20.500 14 20.500q4 0 6.500-1.500" stroke="#0b80e0" strokeWidth="3.600" />],
    ['G 浏览器', false, <path d="M22 2q-3 4-8 4-8 0-9 7 0 7 7 7 6 0 6-5-1-4-5-2" stroke="#28a4f4" strokeWidth="3.600" />],
    ['文件夹', true, <><path d="M2 4h8l2 2h10v15H2z" fill="#ffe694" /><path d="M2 4h8l2 2h10v2H2z" fill="#f0c040" /><path d="M6 21v-8h12v8h-3v-4H9v4z" fill="#38a9e4" /></>],
    ['应用商店', false, <><path d="M2 8 22 6v16L2 20z" fill="#fff" /><path d="M8 7q0-6 4-6t4 6" stroke="#fff" strokeWidth="1.500" /><path d="M7 10.500h4.500v3.500H7zM12.500 10.500H17V14h-4.500zM7 15h4.500v3.500H7zM12.500 15H17v3.500h-4.500z" fill="#111" /></>],
    ['K', true, <path d="M5 2h5L8 12 17 7h5l-11 7 8 8h-5l-6-7-1.500 7H2z" fill="#1c9bd4" />],
    ['日历', true, <><path d="M2 5h20v17H2z" fill="#fff" /><path d="M6 2v5M12 2v5M18 2v5" stroke="#fff" strokeWidth="3" /><path d="M5 12h15M5 15.500h15M5 19h15" stroke="#111" strokeWidth="2" strokeDasharray="2 1.500" /></>],
    ['广联达', true, <><path d="M22 2q-3 4-8 4-8 0-9 7 0 7 7 7 6 0 6-5-1-4-5-2" stroke="#2aa0cc" strokeWidth="3.600" /><path d="m2 12 5-2 9 11-5 2z" fill="#e8485c" /></>],
    ['Word', true, <><path d="M12 4h10v16H12z" fill="#fff" stroke="#2b579a" /><path d="M14 8h6M14 11h6M14 14h6M14 17h6" stroke="#2b579a" /><path d="m1 4 13-2v20L1 20z" fill="#2b579a" /><path d="m4 8 1.500 8L7.500 9l2 7L11 8" stroke="#fff" strokeWidth="1.400" /></>],
    ['GGJ', 'active', <><rect width="24" height="24" rx="4" fill="#0c90f8" /><path d="M15.500 8V7q0-2.500-2-2.500t-2 2.500v10q0 2.500-2.500 2.500M4 12.500h14q2 0 2 2.500M4 12.500q0 3 3 3" stroke="#fff" strokeWidth="1.800" /></>],
    ['画图', true, <><path d="M2 14Q2 6 11 5q9 1 8 7-1 3-5 3-2 1-1 4-1 3-5 2-6-2-6-7z" fill="#e9eef4" stroke="#9bb4cc" /><circle cx="6" cy="12" r="1.800" fill="#e04848" /><circle cx="10" cy="9" r="1.800" fill="#3cb84c" /><circle cx="6.500" cy="17" r="1.800" fill="#3c78d8" /><path d="M21 2 12 22" stroke="#d88a34" strokeWidth="3" /></>],
];

function Taskbar() {
    return (
        <div className="flex items-center h-10 bg-[#0c0a07] text-white">
            <button type="button" aria-label="开始" className="w-12 flex justify-center">
                <svg viewBox="0 0 16 16" className="size-4" fill="#fff"><path d="M0 2.200 7 1.200v6.300H0zM8 1l8-1v7.500H8zM0 8.500h7v6.300l-7-1zM8 8.500h8V16l-8-1z" /></svg>
            </button>
            <div className="flex items-center w-[343px] h-full bg-[#333] pl-[9px] pr-3.5">
                <svg viewBox="0 0 22 22" fill="none" className="size-[22px] shrink-0"><circle cx="11" cy="11" r="9" stroke="#fff" strokeWidth="2.500" /></svg>
                <input aria-label="搜索" placeholder="在这里输入你要搜索的内容" className="flex-1 min-w-0 ml-[5px] text-sm bg-transparent outline-none placeholder:text-[#9a9a9a]" />
                <svg viewBox="0 0 12 18" fill="none" className="w-3 h-[18px] shrink-0"><path d="M3.500 1h5v10h-5zM1 8v5.500h10V8M6 13.500V17M3.500 17h5" stroke="#a8a8a8" /></svg>
            </div>
            <div className="flex mr-1">
                {PINNED.map(([name, art]) => (
                    <button type="button" key={name} aria-label={name} className="w-[50px] flex justify-center"><svg viewBox="0 0 24 24" fill="none" className="size-[22px]">{art}</svg></button>
                ))}
            </div>
            {RUNNING.map(([name, state, art]) => (
                <button type="button" key={name} aria-label={name} className={`w-[49px] h-full flex flex-col items-center ${state === 'active' ? 'bg-[#3c3a38]' : ''}`}>
                    <span className="flex-1 flex items-center"><svg viewBox="0 0 24 24" fill="none" className="size-6">{art}</svg></span>
                    <span className={`h-0.5 ${state === 'active' ? 'w-full bg-[#76b9ed]' : state ? 'w-10 bg-[#76b9ed]' : 'w-10'}`} />
                </button>
            ))}
            <div className="ml-auto flex items-center h-full">
                <div className="flex items-center gap-[9px]">
                    <svg viewBox="0 0 12 8" fill="none" className="w-3 h-2"><path d="m1 7 5-5 5 5" stroke="#fff" strokeWidth="1.200" /></svg>
                    <svg viewBox="0 0 16 12" fill="none" className="w-4 h-3"><path d="M4.500 3.500h10v6h-10zM15.500 5v3M1 1v3h3V1M2.500 4v3h2" stroke="#fff" /><path d="M8 5h5v3H8z" fill="#fff" /></svg>
                    <svg viewBox="0 0 14 14" fill="none" className="size-3.5"><path d="M1 13Q1 2 13 1M4 13Q4 5 13 4.500M7 13q0-5 6-5.500M10 13q0-2 3-2.500" stroke="#ddd" strokeWidth="1.200" /></svg>
                    <svg viewBox="0 0 17 14" fill="none" className="w-[17px] h-3.5"><path d="M1 5h2.500L7 2v10L3.500 9H1zM9 5q1.500 2 0 4M11.500 3q3 4 0 8M14 1q4 6 0 12" stroke="#fff" /></svg>
                    <span className="size-4 bg-[#8a8a8a] text-xs leading-4 text-center">英</span>
                </div>
                <svg viewBox="0 0 15 15" className="size-[15px] ml-3"><path d="M0 0h15v15H0z" fill="#d0d0d0" /><path d="M0 4h4v5H0zM11 4h4v5h-4z" fill="#188878" /><circle cx="7.500" cy="6.500" r="4.500" fill="#fff" stroke="#222" /><circle cx="7.500" cy="6.500" r="2.700" fill="#f01818" /><path d="M5 12h6v3H5z" fill="#2030d0" /></svg>
                <div className="w-24 text-center leading-[19px]"><p>8:01</p><p>2017/12/24</p></div>
                <svg viewBox="0 0 16 16" fill="none" className="size-4 mr-5"><path d="M.5 1.500h15v11H11L8 15.500l-2-3H.5z" stroke="#fff" strokeWidth="1.200" /></svg>
                <span className="h-full w-[5px] border-l border-[#666]" />
            </div>
        </div>
    );
}

export default function App() {
    return (
        <div className="min-h-screen overflow-x-hidden bg-white text-black text-xs leading-4 font-['Noto_Sans','Noto_Sans_CJK_SC',sans-serif]">
            <TitleBar />
            <div className="bg-[#f0f0f0]">
                <MenuBar />
                <div className="flex h-[31px] pl-0.5 pb-0.5">
                    <Group className="pr-0.5">{tools(MAIN_TOOLS)}</Group>
                    <Group className="ml-1 pr-0.5">
                        <div className="flex items-center h-full pr-0.5 bg-white"><Tool icon="cube" label="三维" split /></div>
                        {tools(VIEW_TOOLS)}
                    </Group>
                </div>
                <div className="flex">
                    <NavPanel />
                    <Workspace />
                    <PropertyPanel />
                </div>
                <StatusBar />
            </div>
            <Taskbar />
        </div>
    );
}
